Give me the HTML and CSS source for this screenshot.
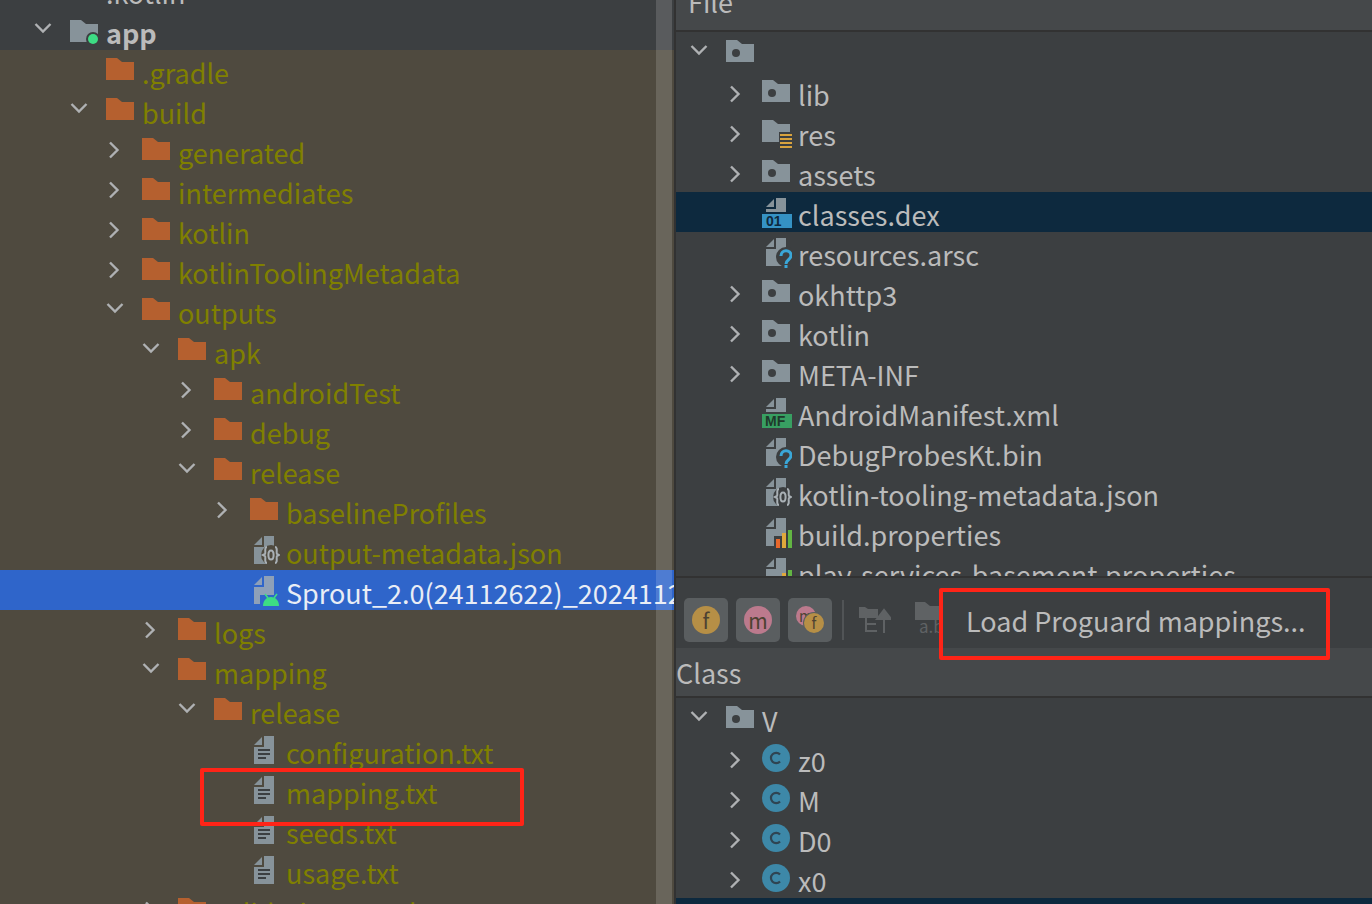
FILE: index.html
```html
<!DOCTYPE html>
<html lang="en">
<head>
<meta charset="utf-8">
<title>APK Analyzer</title>
<link rel="stylesheet" href="styles.css">
</head>
<body>
<svg class="defs" width="0" height="0" aria-hidden="true">
  <defs>
    <symbol id="chev-d" viewBox="0 0 18 12"><path d="M1.5 2 9 9.500 16.500 2" fill="none" stroke="#afb1b3" stroke-width="2.400"/></symbol>
    <symbol id="chev-r" viewBox="0 0 12 18"><path d="M2 1.500 9.500 9 2 16.500" fill="none" stroke="#afb1b3" stroke-width="2.400"/></symbol>
    <symbol id="folder" viewBox="0 0 28 22"><path d="M0 0h11l5 4h12v18H0z" fill="#b5602f"/></symbol>
    <symbol id="pkg" viewBox="0 0 28 22"><path d="M0 0h11l5 4h12v18H0z" fill="#87939a"/><circle cx="10" cy="13" r="4" fill="#3c3f41"/></symbol>
    <symbol id="mod" viewBox="0 0 28 24"><path d="M0 0h11l5 4h12v18H0z" fill="#87939a"/><circle cx="23" cy="19" r="7" fill="#3c3f41"/><circle cx="23" cy="19" r="5" fill="#3ddc84"/></symbol>
    <symbol id="resdir" viewBox="0 0 30 28"><path d="M0 0h11l5 4h12v18H0z" fill="#87939a"/><path d="M17 12h13v16H17z" fill="#3c3f41"/><path d="M18 14h12v2H18zM18 18h12v2H18zM18 22h12v2H18zM18 26h12v2H18z" fill="#d9a33e"/></symbol>
    <symbol id="txt" viewBox="0 0 20 28"><path d="M0 9 8 1v8zM10 0h10v28H0V11h10z" fill="#87939a"/><path d="M4 13h12v2H4zM4 17h12v2H4zM4 21h8v2H4z" fill="#3c3f41"/></symbol>
    <symbol id="json" viewBox="0 0 26 28"><path d="M0 9 8 1v8zM10 0h10v28H0V11h10z" fill="#87939a"/><circle cx="17" cy="19" r="10" fill="#4f4a3f"/><path d="M13 11c-3 0-1 6-2 7l-2 1 2 1c1 1-1 7 2 7M21 11c3 0 1 6 2 7l2 1-2 1c-1 1 1 7-2 7" fill="none" stroke="#a9b0b5" stroke-width="2"/><ellipse cx="17" cy="19" rx="2.600" ry="4.500" fill="none" stroke="#a9b0b5" stroke-width="2"/></symbol>
    <symbol id="json2" viewBox="0 0 26 28"><path d="M0 9 8 1v8zM10 0h10v28H0V11h10z" fill="#87939a"/><circle cx="17" cy="19" r="10" fill="#3c3f41"/><path d="M13 11c-3 0-1 6-2 7l-2 1 2 1c1 1-1 7 2 7M21 11c3 0 1 6 2 7l2 1-2 1c-1 1 1 7-2 7" fill="none" stroke="#a9b0b5" stroke-width="2"/><ellipse cx="17" cy="19" rx="2.600" ry="4.500" fill="none" stroke="#a9b0b5" stroke-width="2"/></symbol>
    <symbol id="apk" viewBox="0 0 26 30"><path d="M0 9 8 1v8zM10 0h10v28H0V11h10z" fill="#8ea0b8"/><path d="M6 19h14v11H6z" fill="#2f65ca"/><path d="M9 30c0-5 3-9 8-9s8 4 8 9z" fill="#3ddc84"/><path d="M11 18l3 4M23 18l-3 4" stroke="#3ddc84" stroke-width="1.600"/></symbol>
    <symbol id="unk" viewBox="0 0 26 30"><path d="M0 9 8 1v8zM10 0h10v28H0V11h10z" fill="#87939a"/><circle cx="20" cy="19" r="10" fill="#3c3f41"/><path d="M15 18c0-7 10-7 10-.5 0 4.500-5 4-5 8.500" fill="none" stroke="#3aa7d8" stroke-width="3"/><path d="M18.500 27h3v3h-3z" fill="#3aa7d8"/></symbol>
    <symbol id="dex" viewBox="0 0 30 30"><path d="M4 9 12 1v8zM14 0h10v14H4v-3h10z" fill="#87939a"/><path d="M0 16h30v14H0z" fill="#3592c4"/><text x="4" y="28" font-size="14" font-weight="700" font-family="Liberation Sans, sans-serif" fill="#0d293e">01</text></symbol>
    <symbol id="mf" viewBox="0 0 30 30"><path d="M4 9 12 1v8zM14 0h10v14H4v-3h10z" fill="#87939a"/><path d="M0 16h30v14H0z" fill="#389f62"/><text x="3" y="28" font-size="14" font-weight="700" font-family="Liberation Sans, sans-serif" fill="#1f3a2b">MF</text></symbol>
    <symbol id="props" viewBox="0 0 26 30"><path d="M0 9 8 1v8zM10 0h10v28H0V11h10z" fill="#87939a"/><path d="M8 18h18v12H8z" fill="#3c3f41"/><path d="M10 21h4v9h-4z" fill="#e8682c"/><path d="M16 15h4v15h-4z" fill="#e0a93b"/><path d="M22 12h4v18h-4z" fill="#62b543"/></symbol>
    <symbol id="cls" viewBox="0 0 28 28"><circle cx="14" cy="14" r="14" fill="#3d88a8"/><path d="M18 10.500a5.200 5.200 0 1 0 0 7" fill="none" stroke="#2f4452" stroke-width="2.200"/></symbol>
  </defs>
</svg>

<main class="screen">
  <section class="left">
    <div class="tree left-tree">
      <div class="row head d0"><span class="arrow"></span><span class="ico"></span><span class="name plain">.kotlin</span></div>
      <div class="row head d0"><span class="arrow ad"><svg class="cd"><use href="#chev-d"/></svg></span><span class="ico"><svg class="i-mod"><use href="#mod"/></svg></span><span class="name plain bold">app</span></div>
      <div class="row d1"><span class="arrow"></span><span class="ico"><svg class="i-f"><use href="#folder"/></svg></span><span class="name">.gradle</span></div>
      <div class="row d1"><span class="arrow ad"><svg class="cd"><use href="#chev-d"/></svg></span><span class="ico"><svg class="i-f"><use href="#folder"/></svg></span><span class="name">build</span></div>
      <div class="row d2"><span class="arrow"><svg class="cr"><use href="#chev-r"/></svg></span><span class="ico"><svg class="i-f"><use href="#folder"/></svg></span><span class="name">generated</span></div>
      <div class="row d2"><span class="arrow"><svg class="cr"><use href="#chev-r"/></svg></span><span class="ico"><svg class="i-f"><use href="#folder"/></svg></span><span class="name">intermediates</span></div>
      <div class="row d2"><span class="arrow"><svg class="cr"><use href="#chev-r"/></svg></span><span class="ico"><svg class="i-f"><use href="#folder"/></svg></span><span class="name">kotlin</span></div>
      <div class="row d2"><span class="arrow"><svg class="cr"><use href="#chev-r"/></svg></span><span class="ico"><svg class="i-f"><use href="#folder"/></svg></span><span class="name">kotlinToolingMetadata</span></div>
      <div class="row d2"><span class="arrow ad"><svg class="cd"><use href="#chev-d"/></svg></span><span class="ico"><svg class="i-f"><use href="#folder"/></svg></span><span class="name">outputs</span></div>
      <div class="row d3"><span class="arrow ad"><svg class="cd"><use href="#chev-d"/></svg></span><span class="ico"><svg class="i-f"><use href="#folder"/></svg></span><span class="name">apk</span></div>
      <div class="row d4"><span class="arrow"><svg class="cr"><use href="#chev-r"/></svg></span><span class="ico"><svg class="i-f"><use href="#folder"/></svg></span><span class="name">androidTest</span></div>
      <div class="row d4"><span class="arrow"><svg class="cr"><use href="#chev-r"/></svg></span><span class="ico"><svg class="i-f"><use href="#folder"/></svg></span><span class="name">debug</span></div>
      <div class="row d4"><span class="arrow ad"><svg class="cd"><use href="#chev-d"/></svg></span><span class="ico"><svg class="i-f"><use href="#folder"/></svg></span><span class="name">release</span></div>
      <div class="row d5"><span class="arrow"><svg class="cr"><use href="#chev-r"/></svg></span><span class="ico"><svg class="i-f"><use href="#folder"/></svg></span><span class="name">baselineProfiles</span></div>
      <div class="row d5"><span class="arrow"></span><span class="ico"><svg class="i-json"><use href="#json"/></svg></span><span class="name">output-metadata.json</span></div>
      <div class="row d5 sel"><span class="arrow"></span><span class="ico"><svg class="i-doc"><use href="#apk"/></svg></span><span class="name white">Sprout_2.0(24112622)_20241126</span></div>
      <div class="row d3"><span class="arrow"><svg class="cr"><use href="#chev-r"/></svg></span><span class="ico"><svg class="i-f"><use href="#folder"/></svg></span><span class="name">logs</span></div>
      <div class="row d3"><span class="arrow ad"><svg class="cd"><use href="#chev-d"/></svg></span><span class="ico"><svg class="i-f"><use href="#folder"/></svg></span><span class="name">mapping</span></div>
      <div class="row d4"><span class="arrow ad"><svg class="cd"><use href="#chev-d"/></svg></span><span class="ico"><svg class="i-f"><use href="#folder"/></svg></span><span class="name">release</span></div>
      <div class="row d5"><span class="arrow"></span><span class="ico"><svg class="i-txt"><use href="#txt"/></svg></span><span class="name">configuration.txt</span></div>
      <div class="row d5"><span class="arrow"></span><span class="ico"><svg class="i-txt"><use href="#txt"/></svg></span><span class="name">mapping.txt</span></div>
      <div class="row d5"><span class="arrow"></span><span class="ico"><svg class="i-txt"><use href="#txt"/></svg></span><span class="name">seeds.txt</span></div>
      <div class="row d5"><span class="arrow"></span><span class="ico"><svg class="i-txt"><use href="#txt"/></svg></span><span class="name">usage.txt</span></div>
      <div class="row d3"><span class="arrow"><svg class="cr"><use href="#chev-r"/></svg></span><span class="ico"><svg class="i-f"><use href="#folder"/></svg></span><span class="name">validation_results</span></div>
    </div>
    <div class="scrollbar"></div>
    <div class="mark mark-left"></div>
  </section>

  <section class="right">
    <div class="file-pane">
      <div class="col-head first"><span class="col-title">File</span></div>
      <div class="tree">
        <div class="row r0"><span class="arrow ad"><svg class="cd"><use href="#chev-d"/></svg></span><span class="ico"><svg class="i-f"><use href="#pkg"/></svg></span><span class="name plain"></span></div>
        <div class="row r1"><span class="arrow ar"><svg class="cr"><use href="#chev-r"/></svg></span><span class="ico"><svg class="i-f"><use href="#pkg"/></svg></span><span class="name plain">lib</span></div>
        <div class="row r1"><span class="arrow ar"><svg class="cr"><use href="#chev-r"/></svg></span><span class="ico"><svg class="i-res"><use href="#resdir"/></svg></span><span class="name plain">res</span></div>
        <div class="row r1"><span class="arrow ar"><svg class="cr"><use href="#chev-r"/></svg></span><span class="ico"><svg class="i-f"><use href="#pkg"/></svg></span><span class="name plain">assets</span></div>
        <div class="row r1 sel-dark"><span class="arrow"></span><span class="ico"><svg class="i-wide"><use href="#dex"/></svg></span><span class="name plain">classes.dex</span></div>
        <div class="row r1"><span class="arrow"></span><span class="ico"><svg class="i-doc"><use href="#unk"/></svg></span><span class="name plain">resources.arsc</span></div>
        <div class="row r1"><span class="arrow ar"><svg class="cr"><use href="#chev-r"/></svg></span><span class="ico"><svg class="i-f"><use href="#pkg"/></svg></span><span class="name plain">okhttp3</span></div>
        <div class="row r1"><span class="arrow ar"><svg class="cr"><use href="#chev-r"/></svg></span><span class="ico"><svg class="i-f"><use href="#pkg"/></svg></span><span class="name plain">kotlin</span></div>
        <div class="row r1"><span class="arrow ar"><svg class="cr"><use href="#chev-r"/></svg></span><span class="ico"><svg class="i-f"><use href="#pkg"/></svg></span><span class="name plain">META-INF</span></div>
        <div class="row r1"><span class="arrow"></span><span class="ico"><svg class="i-wide"><use href="#mf"/></svg></span><span class="name plain">AndroidManifest.xml</span></div>
        <div class="row r1"><span class="arrow"></span><span class="ico"><svg class="i-doc"><use href="#unk"/></svg></span><span class="name plain">DebugProbesKt.bin</span></div>
        <div class="row r1"><span class="arrow"></span><span class="ico"><svg class="i-json"><use href="#json2"/></svg></span><span class="name plain">kotlin-tooling-metadata.json</span></div>
        <div class="row r1"><span class="arrow"></span><span class="ico"><svg class="i-doc"><use href="#props"/></svg></span><span class="name plain">build.properties</span></div>
        <div class="row r1"><span class="arrow"></span><span class="ico"><svg class="i-doc"><use href="#props"/></svg></span><span class="name plain">play-services-basement.properties</span></div>
      </div>
    </div>
    <div class="toolbar">
      <span class="tool"><span class="badge f">f</span></span>
      <span class="tool"><span class="badge m">m</span></span>
      <span class="tool"><span class="badge m small back">m</span><span class="badge f small front">f</span></span>
      <span class="sep"></span>
      <svg class="dim-a" viewBox="0 0 32 26"><path d="M0 0h6l3 2h10v9H0z" fill="#5f6264"/><path d="M7 11v13h11M7 17h10" fill="none" stroke="#5f6264" stroke-width="2"/><path d="M25 26V6M18 12l7-9 7 9z" fill="#5f6264" stroke="#5f6264" stroke-width="2"/></svg>
      <span class="dim-b"><svg class="dim-c" viewBox="0 0 32 18"><path d="M0 0h10l5 4h17v14H0z" fill="#5f6264"/></svg><span class="ab">a.b</span></span>
      <span class="load">Load Proguard mappings...</span>
    </div>
    <div class="col-head"><span class="col-title">Class</span></div>
    <div class="tree">
      <div class="row r0"><span class="arrow ad"><svg class="cd"><use href="#chev-d"/></svg></span><span class="ico"><svg class="i-f"><use href="#pkg"/></svg></span><span class="name plain">V</span></div>
      <div class="row r1"><span class="arrow ar"><svg class="cr"><use href="#chev-r"/></svg></span><span class="ico"><svg class="i-c"><use href="#cls"/></svg></span><span class="name plain">z0</span></div>
      <div class="row r1"><span class="arrow ar"><svg class="cr"><use href="#chev-r"/></svg></span><span class="ico"><svg class="i-c"><use href="#cls"/></svg></span><span class="name plain">M</span></div>
      <div class="row r1"><span class="arrow ar"><svg class="cr"><use href="#chev-r"/></svg></span><span class="ico"><svg class="i-c"><use href="#cls"/></svg></span><span class="name plain">D0</span></div>
      <div class="row r1"><span class="arrow ar"><svg class="cr"><use href="#chev-r"/></svg></span><span class="ico"><svg class="i-c"><use href="#cls"/></svg></span><span class="name plain">x0</span></div>
      <div class="row sel-dark"></div>
    </div>
    <div class="mark mark-right"></div>
  </section>
</main>
</body>
</html>
```

FILE: styles.css
```css
* { box-sizing: border-box; }
html, body { margin: 0; height: 100%; overflow: hidden; background: #3c3f41; }
body { font-family: "Noto Sans CJK SC", "Noto Sans", sans-serif; font-size: 27px; color: #bbbbbb; }
.defs { position: absolute; }
.screen { display: flex; width: 1372px; height: 904px; overflow: hidden; }

.left { position: relative; width: 676px; flex: none; background: #4f4a3f; overflow: hidden; border-right: 2px solid #323232; }
.left-tree { margin-top: -30px; }
.right { position: relative; flex: 1; min-width: 0; overflow: hidden; display: flex; flex-direction: column; background: #3c3f41; }

.row { display: flex; align-items: flex-start; height: 40px; white-space: nowrap; }
.head { background: #3c3f41; }
.arrow { flex: none; width: 36px; height: 40px; display: flex; align-items: center; justify-content: center; }
.ad { padding-bottom: 4px; }
.ar { padding-top: 3px; }
.left .cr { margin-right: 2px; }
.ico { flex: none; width: 46px; height: 40px; padding-left: 9px; padding-top: 8px; display: block; }
.ico svg { display: block; overflow: visible; }
.name { line-height: 40px; color: #808000; margin-left: -1px; padding-top: 3px; }
.plain { color: #bbbbbb; }
.bold { font-weight: 700; }
.white { color: #e9edf5; }
.sel { background: #2f65ca; }
.sel-dark { background: #0d293e; }

.d0 { padding-left: 25px; }
.d1 { padding-left: 61px; }
.d2 { padding-left: 97px; }
.d3 { padding-left: 133px; }
.d4 { padding-left: 169px; }
.d5 { padding-left: 205px; }
.r0 { padding-left: 5px; }
.r1 { padding-left: 41px; }

.cd { width: 18px; height: 12px; }
.cr { width: 12px; height: 18px; }
.i-f { width: 28px; height: 22px; }
.i-mod { width: 28px; height: 24px; margin-top: 2px; }
.i-res { width: 30px; height: 28px; }
.i-txt { width: 20px; height: 28px; margin-left: 4px; margin-top: -2px; }
.i-json { width: 26px; height: 28px; margin-left: 4px; margin-top: -2px; }
.i-doc { width: 26px; height: 30px; margin-left: 4px; margin-top: -2px; }
.i-wide { width: 30px; height: 30px; margin-top: -2px; }
.i-c { width: 28px; height: 28px; margin-top: -2px; }

.scrollbar { position: absolute; top: 0; right: 2px; width: 16px; height: 100%; background: rgba(255, 255, 255, 0.15); }

.col-head { height: 50px; flex: none; background: #45484a; border-bottom: 2px solid #323232; line-height: 50px; overflow: hidden; }
.col-head.first { height: 32px; padding-left: 12px; line-height: 16px; }
.col-title { display: block; }
.first .col-title { margin-top: -6px; }

.file-pane { height: 576px; flex: none; overflow: hidden; }
.toolbar { flex: none; height: 72px; border-top: 2px solid #323232; display: flex; align-items: center; padding: 14px 0 0 8px; gap: 8px; background: #3c3f41; }
.tool { width: 44px; height: 44px; border-radius: 5px; background: #5a5e60; display: flex; align-items: center; justify-content: center; flex: none; position: relative; }
.badge { width: 28px; height: 28px; border-radius: 50%; display: flex; align-items: center; justify-content: center; font-size: 21px; line-height: 28px; color: #4d4232; }
.f { background: #b68f46; }
.m { background: #bc7a8d; }
.small { width: 20px; height: 20px; font-size: 15px; line-height: 20px; }
.back { position: absolute; left: 8px; top: 8px; }
.front { position: absolute; left: 16px; top: 15px; box-shadow: 0 0 0 1px #5a5e60; }
.sep { width: 2px; height: 40px; background: #515456; flex: none; margin-left: 2px; }
.dim-a { display: block; width: 32px; height: 26px; flex: none; margin-left: 7px; }
.dim-b { position: relative; width: 32px; height: 40px; flex: none; margin-left: 16px; padding-top: 2px; }
.dim-c { display: block; width: 32px; height: 18px; }
.ab { position: absolute; left: 4px; top: 16px; font-size: 17px; line-height: 20px; color: #5f6264; }
.load { position: relative; flex: none; margin-left: -13px; align-self: stretch; margin-top: -14px; padding: 14px 0 0 24px; width: 400px; background: #3c3f41; line-height: 58px; }

.mark { position: absolute; border: 4px solid #ff2417; border-radius: 2px; }
.mark-left { left: 200px; top: 768px; width: 324px; height: 58px; }
.mark-right { left: 263px; top: 588px; width: 391px; height: 72px; }
```
